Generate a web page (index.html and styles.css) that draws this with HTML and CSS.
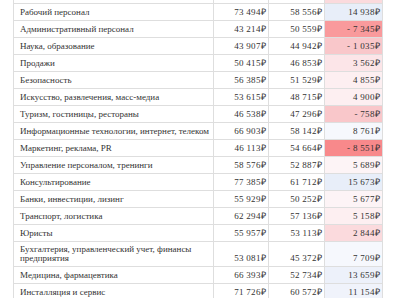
FILE: index.html
```html
<!DOCTYPE html>
<html lang="ru">
<head>
<meta charset="utf-8">
<link rel="stylesheet" href="styles.css">
</head>
<body>
<table class="salary">
<colgroup><col class="c-name"><col class="c-num"><col class="c-num2"><col class="c-diff"></colgroup>
<tbody>
<tr class="partial"><td>&nbsp;</td><td class="num">&nbsp;</td><td class="num">&nbsp;</td><td class="num d-pink2">&nbsp;</td></tr>
<tr><td>Рабочий персонал</td><td class="num">73 494₽</td><td class="num">58 556₽</td><td class="num d-blue1">14 938₽</td></tr>
<tr><td>Административный персонал</td><td class="num">43 214₽</td><td class="num">50 559₽</td><td class="num d-red1">- 7 345₽</td></tr>
<tr><td>Наука, образование</td><td class="num">43 907₽</td><td class="num">44 942₽</td><td class="num d-red2">- 1 035₽</td></tr>
<tr><td>Продажи</td><td class="num">50 415₽</td><td class="num">46 853₽</td><td class="num d-pink3">3 562₽</td></tr>
<tr><td>Безопасность</td><td class="num">56 385₽</td><td class="num">51 529₽</td><td class="num d-pink4">4 855₽</td></tr>
<tr><td>Искусство, развлечения, масс-медиа</td><td class="num">53 615₽</td><td class="num">48 715₽</td><td class="num d-pink4">4 900₽</td></tr>
<tr><td>Туризм, гостиницы, рестораны</td><td class="num">46 538₽</td><td class="num">47 296₽</td><td class="num d-red2">- 758₽</td></tr>
<tr><td>Информационные технологии, интернет, телеком</td><td class="num">66 903₽</td><td class="num">58 142₽</td><td class="num d-blue4">8 761₽</td></tr>
<tr><td>Маркетинг, реклама, PR</td><td class="num">46 113₽</td><td class="num">54 664₽</td><td class="num d-red0">- 8 551₽</td></tr>
<tr><td>Управление персоналом, тренинги</td><td class="num">58 576₽</td><td class="num">52 887₽</td><td class="num d-pink5">5 689₽</td></tr>
<tr><td>Консультирование</td><td class="num">77 385₽</td><td class="num">61 712₽</td><td class="num d-blue1">15 673₽</td></tr>
<tr><td>Банки, инвестиции, лизинг</td><td class="num">55 929₽</td><td class="num">50 252₽</td><td class="num d-pink5">5 677₽</td></tr>
<tr><td>Транспорт, логистика</td><td class="num">62 294₽</td><td class="num">57 136₽</td><td class="num d-pink4">5 158₽</td></tr>
<tr><td>Юристы</td><td class="num">55 957₽</td><td class="num">53 113₽</td><td class="num d-pink2">2 844₽</td></tr>
<tr class="tall"><td>Бухгалтерия, управленческий учет, финансы<br>предприятия</td><td class="num">53 081₽</td><td class="num">45 372₽</td><td class="num d-blue4">7 709₽</td></tr>
<tr><td>Медицина, фармацевтика</td><td class="num">66 393₽</td><td class="num">52 734₽</td><td class="num d-blue2">13 659₽</td></tr>
<tr><td>Инсталляция и сервис</td><td class="num">71 726₽</td><td class="num">60 572₽</td><td class="num d-blue3">11 154₽</td></tr>
</tbody>
</table>
</body>
</html>
```

FILE: styles.css
```css
html, body {
  margin: 0;
  padding: 0;
  background: #ffffff;
  overflow: hidden;
}

.salary {
  margin: -14px 0 0 13px;
  border-collapse: collapse;
  table-layout: fixed;
  width: 370px;
  font-family: "Liberation Serif", "Times New Roman", serif;
  font-size: 9px;
  line-height: 8px;
  color: #333333;
}

.c-name { width: 200px; }
.c-num { width: 55px; }
.c-num2 { width: 56px; }
.c-diff { width: 58px; }

.salary td {
  border: 1px solid #dedede;
  padding: 4px 2px 4px 6px;
  height: 8px;
  vertical-align: middle;
  white-space: nowrap;
  overflow: hidden;
}

.salary td.num {
  text-align: right;
  padding: 4px 2px 4px 2px;
  letter-spacing: 0.3px;
}

.salary tr.tall td {
  height: 18px;
  line-height: 9px;
  padding-top: 3px;
  padding-bottom: 3px;
}

.salary tr.tall td.num {
  vertical-align: bottom;
}

.d-red0 { background: #f8898b; }
.d-red1 { background: #f99a9c; }
.d-red2 { background: #f9c7ca; }
.d-pink2 { background: #fbdadd; }
.d-pink3 { background: #fce5e8; }
.d-pink4 { background: #fdeff1; }
.d-pink5 { background: #fdf4f6; }
.d-blue1 { background: #e8eef9; }
.d-blue2 { background: #edf1fa; }
.d-blue3 { background: #f0f3fb; }
.d-blue4 { background: #f6f8fd; }
```
